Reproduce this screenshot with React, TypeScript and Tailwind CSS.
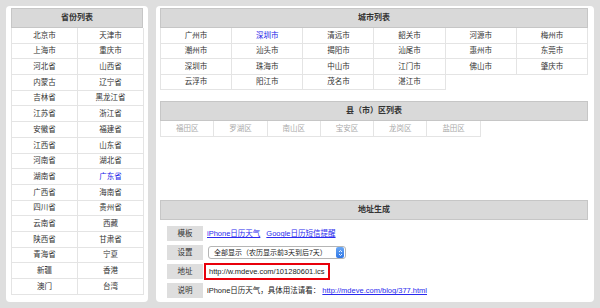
import React from "react";

const provinces: [string, string][] = [
  ["北京市", "天津市"],
  ["上海市", "重庆市"],
  ["河北省", "山西省"],
  ["内蒙古", "辽宁省"],
  ["吉林省", "黑龙江省"],
  ["江苏省", "浙江省"],
  ["安徽省", "福建省"],
  ["江西省", "山东省"],
  ["河南省", "湖北省"],
  ["湖南省", "广东省"],
  ["广西省", "海南省"],
  ["四川省", "贵州省"],
  ["云南省", "西藏"],
  ["陕西省", "甘肃省"],
  ["青海省", "宁夏"],
  ["新疆", "香港"],
  ["澳门", "台湾"],
];

const cities = [
  "广州市", "深圳市", "清远市", "韶关市", "河源市", "梅州市",
  "潮州市", "汕头市", "揭阳市", "汕尾市", "惠州市", "东莞市",
  "深圳市", "珠海市", "中山市", "江门市", "佛山市", "肇庆市",
  "云浮市", "阳江市", "茂名市", "湛江市",
];

const districts = ["福田区", "罗湖区", "南山区", "宝安区", "龙岗区", "盐田区"];

const font = {
  fontFamily:
    '"Helvetica Neue", "Liberation Sans", "Noto Sans CJK SC", sans-serif',
};

function Header({ children }: { children: React.ReactNode }) {
  return (
    <div className="h-[20px] bg-[#d9d9d9] border border-[#c6c6c6] flex items-center justify-center text-[8px] font-bold text-[#333]">
      {children}
    </div>
  );
}

function Label({ children }: { children: React.ReactNode }) {
  return (
    <div className="w-[36px] h-[15px] shrink-0 bg-[#dedede] flex items-center justify-center text-[7.5px] text-[#333]">
      {children}
    </div>
  );
}

export default function App() {
  return (
    <div
      className="w-[600px] h-[308px] bg-[#dedede] flex gap-[8px] p-[6px]"
      style={font}
    >
      {/* Left panel */}
      <div className="w-[142px] h-[296px] bg-white rounded-[4px] px-[5px] pt-[2px]">
        <Header>省份列表</Header>
        <div className="border-l border-[#e4e4e4]">
          {provinces.map(([a, b], i) => (
            <div key={i} className="grid grid-cols-[66px_66px] h-[15.7px]">
              <div className="border-r border-b border-[#e4e4e4] flex items-center justify-center text-[7.5px] text-[#333]">
                {a}
              </div>
              <div
                className={
                  "border-r border-b border-[#e4e4e4] flex items-center justify-center text-[7.5px] " +
                  (b === "广东省" ? "text-[#2020e8]" : "text-[#333]")
                }
              >
                {b}
              </div>
            </div>
          ))}
        </div>
      </div>

      {/* Right panel */}
      <div className="w-[440px] h-[296px] bg-white rounded-[4px] pl-[4px] pr-[6px] pt-[2px] flex flex-col">
        <Header>城市列表</Header>
        <div className="grid grid-cols-6 border-l border-[#e4e4e4]">
          {cities.map((c, i) => (
            <div
              key={i}
              className={
                "h-[15.6px] border-r border-b border-[#e4e4e4] flex items-center justify-center text-[7.5px] " +
                (i === 1 ? "text-[#2020e8]" : "text-[#333]")
              }
            >
              {c}
            </div>
          ))}
        </div>

        <div className="mt-[11px]">
          <Header>县（市）区列表</Header>
        </div>
        <div className="flex border-l border-[#e4e4e4]">
          {districts.map((d) => (
            <div
              key={d}
              className="w-[53.3px] h-[16px] border-r border-b border-[#e4e4e4] flex items-center justify-center text-[7.5px] text-[#aaa]"
            >
              {d}
            </div>
          ))}
        </div>

        <div className="mt-[63px]">
          <Header>地址生成</Header>
        </div>
        <div className="pl-[7px] pt-[6px] flex flex-col gap-[4px]">
          <div className="flex items-center h-[15px]">
            <Label>模板</Label>
            <div className="ml-[4px] flex gap-[6px] text-[7.5px] text-[#2a2aee]">
              <span className="underline">iPhone日历天气</span>
              <span className="underline">Google日历短信提醒</span>
            </div>
          </div>
          <div className="flex items-center h-[15px]">
            <Label>设置</Label>
            <div className="ml-[5px] w-[138px] h-[13px] border border-[#b5b5b5] rounded-[3px] bg-white flex items-center justify-between pl-[5px] pr-[1px]">
              <span className="text-[7px] text-[#222]">
                全部显示（农历显示前3天到后7天）
              </span>
              <span className="w-[8px] h-[11px] rounded-[2px] bg-gradient-to-b from-[#6aa8f5] to-[#2f76e6] flex flex-col items-center justify-center">
                <svg width="5" height="8" viewBox="0 0 5 8">
                  <path d="M1 3 L2.5 1.5 L4 3" stroke="white" strokeWidth="0.9" fill="none" />
                  <path d="M1 5 L2.5 6.5 L4 5" stroke="white" strokeWidth="0.9" fill="none" />
                </svg>
              </span>
            </div>
          </div>
          <div className="flex items-center h-[15px]">
            <Label>地址</Label>
            <div className="ml-[1px] h-[17px] border-2 border-[#e8000b] flex items-center px-[3px] text-[7.5px] text-[#222]">
              http://w.mdeve.com/101280601.ics
            </div>
          </div>
          <div className="flex items-center h-[15px]">
            <Label>说明</Label>
            <div className="ml-[4px] text-[7.5px] text-[#222]">
              iPhone日历天气，具体用法请看：
              <span className="underline text-[#2a2aee] ml-[2px]">
                http://mdeve.com/blog/377.html
              </span>
            </div>
          </div>
        </div>
      </div>
    </div>
  );
}
